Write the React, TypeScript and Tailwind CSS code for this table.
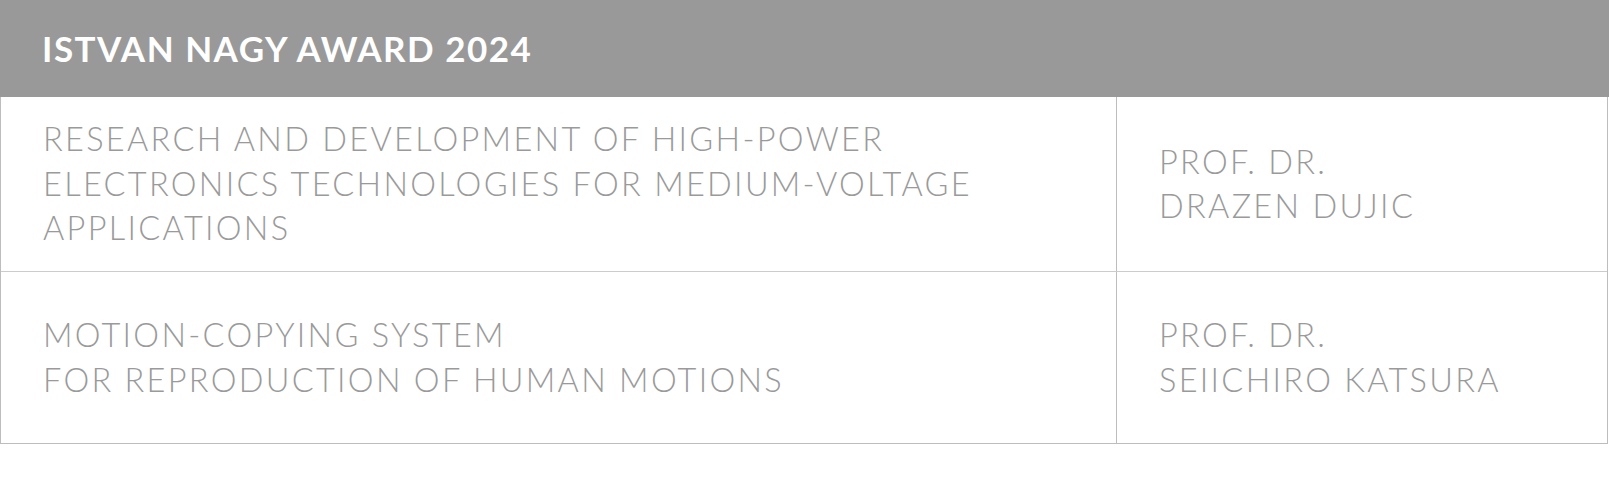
const rows = [
  {
    title: ["RESEARCH AND DEVELOPMENT OF HIGH-POWER", "ELECTRONICS TECHNOLOGIES FOR MEDIUM-VOLTAGE", "APPLICATIONS"],
    name: ["PROF. DR.", "DRAZEN DUJIC"],
    height: "h-[174px]",
  },
  {
    title: ["MOTION-COPYING SYSTEM", "FOR REPRODUCTION OF HUMAN MOTIONS"],
    name: ["PROF. DR.", "SEIICHIRO KATSURA"],
    height: "h-[172px]",
  },
];

export default function App() {
  return (
    <div className="w-[1609px] h-[494px] bg-white font-['Lato',sans-serif]">
      {/* Award header */}
      <div className="h-[97px] bg-[#999999] flex items-center px-[42px]">
        <h2 className="text-white text-[35px] font-bold tracking-[1.5px]">ISTVAN NAGY AWARD 2024</h2>
      </div>

      {/* Award table */}
      <div className="border-l border-r border-b border-[#bdbdbd] w-[1608px]">
        {rows.map((r, i) => (
          <div key={i} className={`flex ${r.height} ${i > 0 ? "border-t border-[#cccccc]" : ""}`}>
            <div className="w-[1116px] border-r border-[#bdbdbd] flex items-center px-[42px]">
              <p className="text-[#9a9a9a] text-[32.5px] font-light leading-[44.5px] tracking-[2.3px]">
                {r.title.map((t) => (
                  <span key={t} className="block">{t}</span>
                ))}
              </p>
            </div>
            <div className="flex-1 flex items-center px-[42px]">
              <p className="text-[#9a9a9a] text-[32.5px] font-light leading-[44.5px] tracking-[2.3px]">
                {r.name.map((t) => (
                  <span key={t} className="block">{t}</span>
                ))}
              </p>
            </div>
          </div>
        ))}
      </div>
    </div>
  );
}
